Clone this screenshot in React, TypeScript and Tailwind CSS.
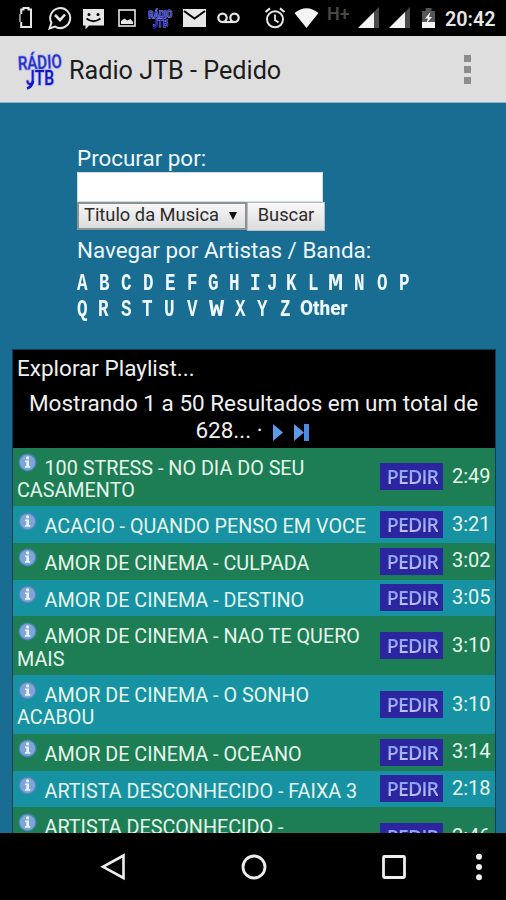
import { twMerge } from "tailwind-merge";

type Song = {
  lines: string[];
  time: string;
};

const songs: Song[] = [
  { lines: ["100 STRESS - NO DIA DO SEU", "CASAMENTO"], time: "2:49" },
  { lines: ["ACACIO - QUANDO PENSO EM VOCE"], time: "3:21" },
  { lines: ["AMOR DE CINEMA - CULPADA"], time: "3:02" },
  { lines: ["AMOR DE CINEMA - DESTINO"], time: "3:05" },
  { lines: ["AMOR DE CINEMA - NAO TE QUERO", "MAIS"], time: "3:10" },
  { lines: ["AMOR DE CINEMA - O SONHO", "ACABOU"], time: "3:10" },
  { lines: ["AMOR DE CINEMA - OCEANO"], time: "3:14" },
  { lines: ["ARTISTA DESCONHECIDO - FAIXA 3"], time: "2:18" },
  { lines: ["ARTISTA DESCONHECIDO -", ""], time: "2:46" },
];

// letter and the width of its cell
const firstLetters: [string, string][] = [
  ["A", "w-[22px]"],
  ["B", "w-[22px]"],
  ["C", "w-[22px]"],
  ["D", "w-[22px]"],
  ["E", "w-[22px]"],
  ["F", "w-[21px]"],
  ["G", "w-[21px]"],
  ["H", "w-[21px]"],
  ["I", "w-[17px]"],
  ["J", "w-[19px]"],
  ["K", "w-[22px]"],
  ["L", "w-[20px]"],
  ["M", "w-[26px]"],
  ["N", "w-[23px]"],
  ["O", "w-[22px]"],
  ["P", "w-[22px]"],
];

const lastLetters: [string, string][] = [
  ["Q", "w-[21px]"],
  ["R", "w-[23px]"],
  ["S", "w-[21px]"],
  ["T", "w-[22px]"],
  ["U", "w-[23px]"],
  ["V", "w-[22px]"],
  ["W", "w-[26px]"],
  ["X", "w-[22px]"],
  ["Y", "w-[23px]"],
  ["Z", "w-[20px]"],
  ["Other", "w-[56px]"],
];

function Logo({ className }: { className: string }) {
  return (
    <svg
      viewBox="0 0 46 40"
      className={twMerge("overflow-visible", className)}
      fontFamily="Roboto, sans-serif"
      fontWeight="500"
    >
      <g fill="#2834c8" stroke="#a4aaec" strokeWidth="1.6" paintOrder="stroke">
        <text x="1" y="20" fontSize="19" textLength="44" lengthAdjust="spacingAndGlyphs" transform="rotate(-3 20 18)">
          RÁDIO
        </text>
        <text x="9" y="36" fontSize="21" textLength="28" lengthAdjust="spacingAndGlyphs" fill="#1414c8">
          JTB
        </text>
      </g>
      <path d="M16 32 q-1 6 -6 7.5" fill="none" stroke="#1414c8" strokeWidth="2.6" />
    </svg>
  );
}

function Signal({ className }: { className: string }) {
  return (
    <svg viewBox="0 0 22 22" className={twMerge("h-[22px] w-[22px]", className)}>
      <path d="M16 5 L21 0 V21 H16 Z" fill="#4b4b4b" />
      <path d="M0 21 L16 5 V21 Z" fill="#f2f2f2" />
    </svg>
  );
}

function StatusBar() {
  return (
    <div className="flex h-[36px] shrink-0 items-start bg-black pt-[6px] text-[#e6e6e6]">
      <svg viewBox="0 0 15 23" className="ml-[18px] h-[23px] w-[15px]" fill="none" stroke="currentColor">
        <path d="M3.2 8 V3.5 H5.5 V2 H10.5 V3.5 H13 V21 H3.2 V16" strokeWidth="2" />
        <path d="M2 8 V16" strokeWidth="1.2" />
      </svg>
      <svg viewBox="0 0 24 24" className="ml-[15px] h-[24px] w-[24px]" fill="none" stroke="currentColor">
        <path d="M1.5 22.5 L3.4 16.8 A10 10 0 1 1 7 20.6 Z" strokeWidth="2" />
        <path d="M7 9 L12 14 L17 8.5" strokeWidth="2.6" />
      </svg>
      <svg viewBox="0 0 23 21" className="mt-[3px] ml-[10px] h-[21px] w-[23px]">
        <path d="M1 0 H22 V16.5 H7 L3.5 20.5 V16.5 H1 Z" fill="currentColor" />
        <circle cx="7" cy="5.5" r="1.5" />
        <circle cx="16" cy="5.5" r="1.5" />
        <path d="M4.5 9.5 Q11.5 15 18.5 9.5" fill="none" stroke="#000" strokeWidth="1.8" />
      </svg>
      <svg viewBox="0 0 18 18" className="mt-[3px] ml-[13px] h-[18px] w-[18px]">
        <rect x="1" y="1" width="16" height="16" fill="none" stroke="currentColor" strokeWidth="1.6" />
        <path d="M3 15 V12 L6.5 9.5 L9 11.5 L12.5 10 L15 13 V15 Z" fill="currentColor" />
      </svg>
      <Logo className="mt-[1px] ml-[12px] h-[22px] w-[25px]" />
      <svg viewBox="0 0 23 18" className="mt-[3px] ml-[10px] h-[18px] w-[23px]">
        <rect width="23" height="18" fill="currentColor" />
        <path d="M1 2 L11.5 9.5 L22 2" fill="none" stroke="#000" strokeWidth="2" />
      </svg>
      <svg viewBox="0 0 23 12" className="mt-[6px] ml-[11px] h-[12px] w-[23px]" fill="none" stroke="currentColor" strokeWidth="2.2">
        <circle cx="5.5" cy="5.8" r="4.2" />
        <circle cx="17.5" cy="5.8" r="4.2" />
        <path d="M5.5 10 H17.5" />
      </svg>
      <svg viewBox="0 0 22 22" className="mt-[1px] ml-[24px] h-[22px] w-[22px]" fill="none" stroke="currentColor">
        <circle cx="11" cy="12.3" r="8" strokeWidth="2" />
        <path d="M11 7.5 V13 L14.5 15.5" strokeWidth="1.8" />
        <path d="M1.5 5 L6 1.3 M16 1.3 L20.5 5" strokeWidth="2.2" />
      </svg>
      <svg viewBox="0 0 25 22" className="mt-[1px] ml-[8px] h-[22px] w-[25px]">
        <path d="M0.5 6 Q12.5 -3.5 24.5 6 L12.5 21 Z" fill="#f4f4f4" />
      </svg>
      <span className="ml-[8px] w-[24px] text-[18px] leading-[16px] font-semibold text-[#484848]">H+</span>
      <Signal className="mt-[1px] ml-[7px]" />
      <Signal className="mt-[1px] ml-[9px]" />
      <svg viewBox="0 0 15 21" className="mt-[2px] ml-[10px] h-[21px] w-[15px]">
        <path d="M1 3 H4.5 V0 H10.5 V3 H14 V14 H1 Z" fill="#565656" />
        <path d="M1 14 H14 V20 H1 Z" fill="#f4f4f4" />
        <path d="M9.5 4 L4 10.5 H7 L5 16 L11 9 H8 Z" fill="#f4f4f4" />
      </svg>
      <span className="mt-[2px] ml-[9px] text-[19.8px] leading-[23px] font-semibold">20:42</span>
    </div>
  );
}

function AppBar() {
  return (
    <div className="flex h-[67px] shrink-0 items-center border-b border-[#8fb4c4] bg-[#dedede]">
      <Logo className="ml-[17px] h-[40px] w-[46px]" />
      <h1 className="mt-[4px] ml-[6px] text-[25.2px] text-[#1c1c1c]">Radio JTB - Pedido</h1>
      <div className="mr-[35px] ml-auto flex flex-col gap-[4px]">
        <i className="h-[7px] w-[7px] bg-[#8c8c8c]" />
        <i className="h-[7px] w-[7px] bg-[#8c8c8c]" />
        <i className="h-[7px] w-[7px] bg-[#8c8c8c]" />
      </div>
    </div>
  );
}

function Letters({ items }: { items: [string, string][] }) {
  return (
    <div className="flex h-[26px] font-['Liberation_Mono',monospace] text-[22px] leading-[26px] font-bold">
      {items.map(([letter, width]) => (
        <a key={letter} className={twMerge("block", width)}>
          {letter === "Other" ? (
            <span className="-mt-[2px] inline-block origin-left scale-x-[0.95] font-[Roboto,sans-serif] text-[20px] font-extrabold">
              {letter}
            </span>
          ) : (
            <span
              className={twMerge(
                "inline-block origin-left scale-x-[0.8] scale-y-[1.1]",
                (letter === "M" || letter === "W") && "scale-x-[1.15]",
              )}
            >
              {letter}
            </span>
          )}
        </a>
      ))}
    </div>
  );
}

function InfoIcon() {
  return (
    <svg viewBox="0 0 19 19" className="-mt-[5px] mr-[7.5px] ml-[1px] inline-block h-[19px] w-[19px] align-[2.5px]">
      <circle cx="9.5" cy="9.5" r="9" fill="#4d86bd" />
      <circle cx="9.5" cy="9.5" r="7.6" fill="#7ea6d6" />
      <path d="M7 7.5 H11 V13 H12.3 V14.8 H7 V13 H8.3 V9 H7 Z" fill="#e9f3fb" />
      <circle cx="9.6" cy="4.9" r="1.6" fill="#e9f3fb" />
    </svg>
  );
}

function SongRow({ song, odd }: { song: Song; odd: boolean }) {
  return (
    <div
      className={twMerge(
        "flex items-center",
        odd ? "bg-[#1692a3]" : "bg-[#1d7e55]",
        song.lines.length > 1 ? "h-[58.9px]" : "h-[36.6px]",
      )}
    >
      <div className="w-[367px] self-start pt-[10px] pl-[4px] text-[19.75px] leading-[22.4px] whitespace-nowrap text-[#e6f6ec]">
        <InfoIcon />
        {song.lines[0]}
        {song.lines[1] && <div>{song.lines[1]}</div>}
      </div>
      <div className="flex h-[27px] w-[63px] items-center justify-center bg-[#2b25a0] pl-[2px]">
        <span className="bg-linear-to-b from-[#6f8df0] to-[#d3d2ff] bg-clip-text font-['Open_Sans',sans-serif] text-[19.5px] leading-[27px] font-semibold tracking-[-0.8px] text-transparent">
          PEDIR
        </span>
      </div>
      <span className="-mt-[2px] ml-[9px] text-[20px] text-[#e6f6ec]">{song.time}</span>
    </div>
  );
}

function NavBar() {
  return (
    <div className="flex h-[67px] shrink-0 items-center bg-black text-[#eeeeee]">
      <svg viewBox="0 0 26 28" className="ml-[100px] h-[28px] w-[26px]" fill="none" stroke="currentColor" strokeWidth="2.6">
        <path d="M23.5 2.5 V25 L3 13.8 Z" />
      </svg>
      <svg viewBox="0 0 28 28" className="ml-[114px] h-[28px] w-[28px]" fill="none" stroke="currentColor" strokeWidth="2.8">
        <circle cx="14" cy="14" r="11" />
      </svg>
      <svg viewBox="0 0 28 28" className="ml-[112px] h-[28px] w-[28px]" fill="none" stroke="currentColor" strokeWidth="2.8">
        <rect x="3.5" y="3.5" width="21" height="21" rx="1" />
      </svg>
      <svg viewBox="0 0 8 28" className="ml-[67px] h-[28px] w-[8px]" fill="currentColor">
        <circle cx="4" cy="3.8" r="3" />
        <circle cx="4" cy="14" r="3" />
        <circle cx="4" cy="24.2" r="3" />
      </svg>
    </div>
  );
}

function App() {
  return (
    <div className="flex h-[900px] w-[506px] flex-col overflow-hidden font-[Roboto,sans-serif]">
      <StatusBar />
      <AppBar />
      <main className="flex min-h-0 flex-1 flex-col overflow-hidden bg-[#196c92]">
        <div className="h-[246px] shrink-0 pt-[42px] pl-[77px] text-[#eef9ff]">
          <label className="block h-[27px] text-[22.4px] leading-[27px]">Procurar por:</label>
          <div className="h-[30px] w-[246px] border border-[#cfdde3] bg-white" />
          <div className="flex h-[29px] items-stretch text-[18.3px] leading-[22px] text-[#2c2c2c]">
            <div className="flex h-[28px] w-[170px] items-center border-2 border-[#8b9296] bg-linear-to-b from-[#f6f6f6] to-[#dddddd] pb-[2px] pl-[5px]">
              Titulo da Musica
              <svg viewBox="0 0 8 8" className="mt-[2px] ml-[10px] h-[8px] w-[8px]">
                <path d="M0 0 H8 L4 8 Z" fill="#111" />
              </svg>
            </div>
            <div className="flex w-[78px] items-center justify-center border border-[#b9bec0] bg-linear-to-b from-[#f8f8f8] to-[#dddddd] pb-[3px]">
              Buscar
            </div>
          </div>
          <p className="mt-[5px] h-[28px] text-[22.4px] leading-[28px]">Navegar por Artistas / Banda:</p>
          <div className="mt-[7px]">
            <Letters items={firstLetters} />
            <Letters items={lastLetters} />
          </div>
        </div>
        <section className="mx-[12px] w-[484px] shrink-0 border border-[#0e3c50] bg-black">
          <header className="h-[97.5px] pt-[5px] text-[22.5px] leading-[27px] text-[#f0f0f0]">
            <h2 className="pl-[4px]">Explorar Playlist...</h2>
            <div className="mt-[8px] pr-[1px] text-center">
              Mostrando 1 a 50 Resultados em um total de
              <div className="flex items-center justify-center pr-[3px]">
                628... ·
                <svg viewBox="0 0 10 17" className="mt-[3px] ml-[10px] h-[17px] w-[10px]">
                  <path d="M0 0 L10 8.5 L0 17 Z" fill="#5b9bea" />
                </svg>
                <svg viewBox="0 0 15 17" className="mt-[3px] ml-[11px] h-[17px] w-[15px]">
                  <path d="M0 0 L10 8.5 L0 17 Z" fill="#5b9bea" />
                  <path d="M10 0 H15 V17 H10 Z" fill="#4a8ae0" />
                </svg>
              </div>
            </div>
          </header>
          {songs.map((song, index) => (
            <SongRow key={index} song={song} odd={index % 2 === 1} />
          ))}
        </section>
      </main>
      <NavBar />
    </div>
  );
}

export default App;
